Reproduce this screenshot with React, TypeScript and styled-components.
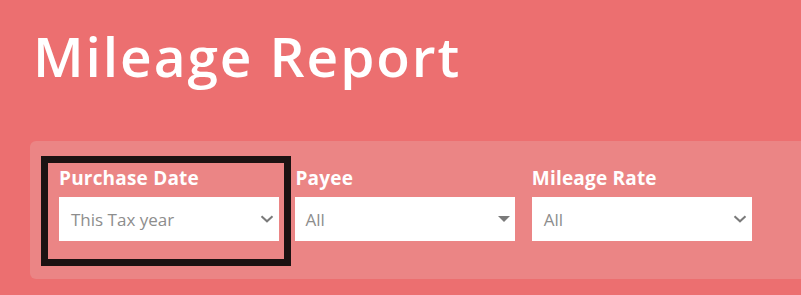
import styled, { createGlobalStyle } from "styled-components";

const GlobalStyle = createGlobalStyle`
  html, body {
    margin: 0;
    padding: 0;
    background: #ec6f70;
    overflow: hidden;
  }
  * { box-sizing: border-box; }
`;

type Caret = "chevron" | "triangle";

const fields: { label: string; value: string; caret: Caret; inset: number; highlight?: boolean }[] = [
  { label: "Purchase Date", value: "This Tax year", caret: "chevron", inset: 12, highlight: true },
  { label: "Payee", value: "All", caret: "triangle", inset: 10 },
  { label: "Mileage Rate", value: "All", caret: "chevron", inset: 12 },
];

const CaretIcon = ({ kind }: { kind: Caret }) =>
  kind === "chevron" ? (
    <svg width="14" height="8" viewBox="0 0 14 8">
      <path d="M1.5 1.2 L7 6.3 L12.5 1.2" fill="none" stroke="#7a7a7a" strokeWidth="2" />
    </svg>
  ) : (
    <svg width="12" height="6" viewBox="0 0 12 6">
      <path d="M0 0 H12 L6 6 Z" fill="#7a7a7a" />
    </svg>
  );

const App = () => {
  return (
    <Page>
      <GlobalStyle />
      <Title>Mileage Report</Title>
      <Panel>
        <Filters>
          {fields.map((f) => (
            <Field key={f.label} $highlight={!!f.highlight}>
              <Label>{f.label}</Label>
              <Select $inset={f.inset}>
                <Value>{f.value}</Value>
                <CaretIcon kind={f.caret} />
              </Select>
            </Field>
          ))}
        </Filters>
      </Panel>
    </Page>
  );
};

export default App;

const Page = styled.div`
  width: 801px;
  height: 295px;
  padding: 23px 0 0 30px;
  font-family: "Open Sans", "Liberation Sans", sans-serif;
`;

const Title = styled.h1`
  margin: 0 0 0 3px;
  font-size: 55px;
  line-height: 66px;
  font-weight: 600;
  color: #ffffff;
  letter-spacing: 1.9px;
`;

const Panel = styled.div`
  margin-top: 52px;
  margin-right: -12px;
  height: 138px;
  padding: 25px 29px;
  background: #eb8585;
  border-radius: 6px 0 0 6px;
`;

const Filters = styled.div`
  display: flex;
  align-items: flex-start;
  column-gap: 16.4px;
`;

const Field = styled.div<{ $highlight: boolean }>`
  position: relative;
  width: 220px;
  display: flex;
  flex-direction: column;

  /* annotation frame drawn over the first filter */
  &::before {
    content: "";
    display: ${(p) => (p.$highlight ? "block" : "none")};
    position: absolute;
    top: -10px;
    left: -18px;
    right: -12px;
    bottom: -25px;
    border: 7px solid #1c1212;
    pointer-events: none;
  }
`;

const Label = styled.label`
  font-size: 19px;
  line-height: 24px;
  font-weight: 700;
  color: #ffffff;
  letter-spacing: 0.2px;
  margin-bottom: 7px;
`;

const Select = styled.div<{ $inset: number }>`
  height: 44px;
  background: #ffffff;
  display: flex;
  align-items: center;
  justify-content: space-between;
  padding: 0 5px 0 ${(p) => p.$inset}px;
`;

const Value = styled.span`
  font-size: 17px;
  color: #8d8d8d;
`;
